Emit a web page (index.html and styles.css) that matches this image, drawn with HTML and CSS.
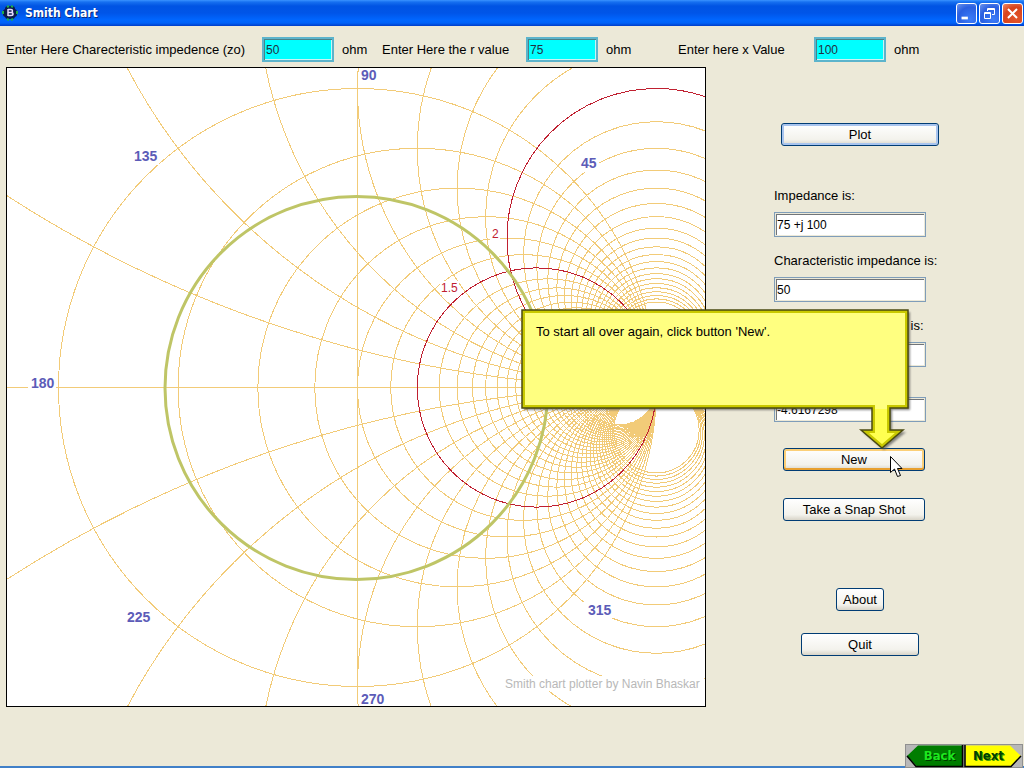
FILE: index.html
```html
<!DOCTYPE html>
<html lang="en">
<head>
<meta charset="utf-8">
<title>Smith Chart</title>
<link rel="stylesheet" href="styles.css">
</head>
<body>
<header class="titlebar">
  <svg class="app-icon" viewBox="0 0 16 16" aria-hidden="true">
    <rect x="3" y="1" width="10" height="13" rx="3" fill="#0b1a4a"/>
    <rect x="1" y="4" width="14" height="8" rx="3" fill="#0b1a4a"/>
    <path d="M5 2l2-1M9 1l2 1M1 6v3M15 6v3M5 14l2 1M9 15l2-1" stroke="#1fae4a" stroke-width="2"/>
    <path d="M6 4v7M6 4.500h3q1.500 0 1.500 1.500T9 7.500H6M9 7.500q2 0 2 1.500T9 10.500H6" fill="none" stroke="#e6dcff" stroke-width="1.500"/>
  </svg>
  <h1 class="title">Smith Chart</h1>
  <button class="win-btn" type="button" aria-label="Minimize"><svg viewBox="0 0 21 21"><rect x="5" y="14" width="7" height="3" fill="#fff"/></svg></button>
  <button class="win-btn" type="button" aria-label="Restore"><svg viewBox="0 0 19 19" fill="none" stroke="#fff"><path d="M7.500 7V4.500h7v6H12M7 5.500h8M4.500 8.500h6v6h-6zM4 9.500h7"/></svg></button>
  <button class="win-btn win-close" type="button" aria-label="Close"><svg viewBox="0 0 21 21"><path d="M5.500 5.500l10 10M15.500 5.500l-10 10" stroke="#fff" stroke-width="2.200"/></svg></button>
</header>

<form class="inputs">
  <label for="zo">Enter Here Charecteristic impedence (zo)</label>
  <input id="zo" class="field field-cyan" type="text" value="50">
  <span class="unit">ohm</span>
  <label for="r">Enter Here the r value</label>
  <input id="r" class="field field-cyan" type="text" value="75">
  <span class="unit">ohm</span>
  <label for="x">Enter here x Value</label>
  <input id="x" class="field field-cyan" type="text" value="100">
  <span class="unit">ohm</span>
</form>

<main class="main">
  <section class="chart">
    <svg class="plot" viewBox="7 68 698 638" role="img" aria-label="Smith chart">
      <g id="grid" class="grid">
        <path d="M7 387.500H705M357.500 82V690"/>
      </g>
      <g class="label-bg">
        <rect x="28" y="376" width="28" height="16"/>
        <rect x="132" y="149" width="27" height="16"/>
        <rect x="359" y="68" width="20" height="14"/>
        <rect x="579" y="156" width="20" height="16"/>
        <rect x="124" y="610" width="30" height="16"/>
        <rect x="360" y="692" width="27" height="14"/>
        <rect x="584" y="601" width="30" height="17"/>
        <rect x="504" y="676" width="200" height="15"/>
        <rect x="440" y="281" width="19" height="14"/>
        <rect x="490" y="227" width="10" height="14"/>
      </g>
      <g id="marks" class="marks"></g>
      <circle class="swr" cx="356.500" cy="388" r="191.500"/>
      <g class="angles">
        <text x="31" y="388">180</text>
        <text x="134" y="161">135</text>
        <text x="361" y="80">90</text>
        <text x="581" y="168">45</text>
        <text x="127" y="622">225</text>
        <text x="361" y="704">270</text>
        <text x="588" y="615">315</text>
      </g>
      <g class="mark-text">
        <text x="441" y="292">1.5</text>
        <text x="492" y="238">2</text>
      </g>
      <text class="credit" x="505" y="688">Smith chart plotter by Navin Bhaskar</text>
    </svg>
  </section>

  <aside class="panel">
    <button class="btn btn-default plot-btn" type="button">Plot</button>
    <div class="results">
      <div class="result"><label for="imp">Impedance is:</label><input id="imp" class="field" type="text" value="75 +j 100"></div>
      <div class="result"><label for="char">Characteristic impedance is:</label><input id="char" class="field" type="text" value="50"></div>
      <div class="result"><label for="norm">Normalized impedance is:</label><input id="norm" class="field" type="text" value="1.5 +j 2"></div>
    </div>
    <input class="field last-field" type="text" value="-4.6167298" aria-label="Return loss">
    <div class="actions">
      <div class="new-wrap">
        <button class="btn btn-hot" type="button">New</button>
        <div class="callout">
          <svg class="callout-shape" viewBox="0 0 396 146" aria-hidden="true">
            <defs>
              <clipPath id="inside"><path d="M1 1H387V99H369V121H382L361 139L340 121H351V99H1Z"/></clipPath>
              <filter id="soft"><feGaussianBlur stdDeviation="1"/></filter>
            </defs>
            <path d="M3 3H389V101H371V123H385L363 141L342 123H353V101H3Z" fill="#555" opacity=".7" filter="url(#soft)"/>
            <path d="M1 1H387V99H369V121H382L361 139L340 121H351V99H1Z" fill="#ffff80"/>
            <path d="M352 100H368V121H381L361 138L341 121H352Z" fill="#ffff50"/>
            <path d="M1 1H387V99H369V121H382L361 139L340 121H351V99H1Z" fill="none" stroke="#c9c900" stroke-width="6" clip-path="url(#inside)"/>
            <path d="M1 1H387V99H369V121H382L361 139L340 121H351V99H1Z" fill="none" stroke="#4a4a10" stroke-width="1.500"/>
          </svg>
          <p class="callout-text">To start all over again, click button 'New'.</p>
        </div>
        <svg class="cursor" viewBox="0 0 13 22" aria-hidden="true"><path d="M.5.500V16.500L4.500 13L7.500 20.500L10.500 19.500L7.500 12.500H12Z" fill="#fff" stroke="#000"/></svg>
      </div>
      <button class="btn" type="button">Take a Snap Shot</button>
    </div>
    <button class="btn about-btn" type="button">About</button>
    <button class="btn quit-btn" type="button">Quit</button>
  </aside>
</main>

<footer class="footer">
  <nav class="nav">
    <button class="nav-btn nav-back" type="button">
      <svg viewBox="0 0 59 24" aria-hidden="true"><rect width="59" height="24" fill="#909090"/><rect x="1" y="1" width="57" height="22" fill="#b8b8b8"/><path d="M2 12L13 1.500H57.500V22.500H12Z" fill="#007d00"/><path d="M2 12L11 22.500H57.500V1" fill="none" stroke="#000" stroke-width="1.500"/></svg>
      <span>Back</span>
    </button>
    <button class="nav-btn nav-next" type="button">
      <svg viewBox="0 0 59 24" aria-hidden="true"><rect width="59" height="24" fill="#909090"/><rect x="1" y="1" width="57" height="22" fill="#b8b8b8"/><path d="M1.500 1.500H46L57 12L47 22.500H1.500Z" fill="#ff0"/><path d="M1 1V22.500H47L57 12" fill="none" stroke="#000" stroke-width="1.500"/></svg>
      <span>Next</span>
    </button>
  </nav>
</footer>
<script src="chart.js"></script>
</body>
</html>
```
FILE: styles.css
```css
* { box-sizing: border-box; }

body {
  margin: 0;
  min-height: 100vh;
  display: flex;
  flex-direction: column;
  background: #ece9d8;
  color: #000;
  font: 13px/16px "Liberation Sans", Arial, sans-serif;
}

button, input { font: inherit; color: inherit; }

.titlebar {
  display: flex;
  align-items: center;
  gap: 2px;
  height: 26px;
  padding: 0 1px 0 2px;
  background: linear-gradient(#3a93ff 0, #1670f0 2px, #0054e3 6px, #0055e8 13px, #0066ff 20px, #0062f8 23px, #003dc8 26px);
}

.app-icon { width: 16px; height: 16px; }

.title {
  flex: 1;
  margin: 0 0 0 5px;
  color: #fff;
  font: bold 12px/16px "DejaVu Sans Condensed", "Open Sans", sans-serif;
  text-shadow: 1px 1px #0a2a80;
}

.win-btn {
  width: 21px;
  height: 21px;
  padding: 0;
  border: 1px solid #fff;
  border-radius: 3px;
  background: radial-gradient(circle at 70% 80%, #3c7cf8, #2a5fe0 60%, #6d95ee);
}

.win-btn svg { display: block; width: 19px; height: 19px; }
.win-close { background: radial-gradient(circle at 70% 80%, #e2542a, #d8441c 60%, #ee8c6c); }

.inputs {
  display: grid;
  grid-template-columns: 256px 72px 48px 144px 72px 80px 136px 72px 1fr;
  align-items: center;
  margin: 0;
  padding: 11px 0 5px 6px;
}

.unit { padding-left: 8px; }

.field {
  width: 100%;
  height: 25px;
  padding: 0 2px;
  border: 1px solid #7f9db9;
  border-radius: 0;
  outline: 0;
  background: #fff;
  box-shadow: inset 1px 1px #ece9d8, inset -1px -1px #ece9d8, inset 2px 2px #71757a;
  font: 12px/16px "Liberation Sans", Arial, sans-serif;
}

.field-cyan {
  border: 2px solid #5cb4cc;
  background: #0ff;
  box-shadow: inset 1px 1px #4c8088, inset -1px -1px #c8f4f4;
  color: #203040;
}

.main { display: flex; align-items: flex-start; padding-left: 6px; }

.chart { flex: 1; border: 1px solid #000; background: #fff; }
.plot { display: block; width: 100%; }

.grid { fill: none; stroke: #f2cb78; shape-rendering: crispEdges; }
.label-bg { fill: #fff; }
.marks { fill: none; stroke: #c02030; shape-rendering: crispEdges; }
.swr { fill: none; stroke: #bfc566; stroke-width: 3px; }
.angles { fill: #5c5cb8; font: bold 14px "Liberation Sans", Arial, sans-serif; }
.mark-text { fill: #c02030; font-size: 12px; }
.credit { fill: #b8b8b8; font-size: 12px; }

.panel {
  flex: 0 0 318px;
  display: flex;
  flex-direction: column;
  align-items: flex-start;
  padding: 56px 78px 0 68px;
}

.btn {
  width: 100%;
  height: 23px;
  padding: 0;
  border: 1px solid #003c74;
  border-radius: 3px;
  background: linear-gradient(#fff, #f3f2ec 75%, #d8d4c8);
  line-height: 16px;
}

.btn-default { box-shadow: inset 0 0 0 2px #a8c4ee; }
.btn-hot { box-shadow: inset 0 -2px #e8a030, inset 0 0 0 2px #fbcf78; }
.plot-btn { width: 158px; align-self: center; }

.results {
  display: flex;
  flex-direction: column;
  gap: 16px;
  width: 100%;
  margin: 42px 0 30px;
}

.result { display: flex; flex-direction: column; gap: 8px; white-space: nowrap; }
.result .field, .last-field { width: 152px; }

.actions {
  display: flex;
  flex-direction: column;
  gap: 27px;
  width: 142px;
  margin: 26px 0 67px 9px;
}

.new-wrap { position: relative; }
.new-wrap .btn { display: block; }

.callout { position: absolute; left: -262px; top: -139px; width: 396px; height: 146px; pointer-events: none; }
.callout-shape { display: block; width: 100%; height: 100%; }
.callout-text { position: absolute; left: 15px; top: 15px; margin: 0; }
.cursor { position: absolute; left: 107px; top: 8px; width: 13px; height: 22px; }

.about-btn { width: 48px; align-self: center; }
.quit-btn { width: 118px; align-self: center; margin-top: 22px; }

.footer {
  display: flex;
  justify-content: flex-end;
  margin-top: auto;
  border-bottom: 2px solid #4080c8;
}

.nav { display: flex; margin-bottom: -2px; padding-right: 1px; }

.nav-btn {
  display: grid;
  width: 59px;
  height: 24px;
  padding: 0;
  border: 0;
  background: none;
  font: bold 13px/24px "DejaVu Sans Condensed", "DejaVu Sans", sans-serif;
}

.nav-btn > * { grid-area: 1 / 1; }
.nav-btn svg { width: 59px; height: 24px; }
.nav-back span { padding-left: 10px; color: #1ee81e; text-shadow: 1px 1px #003800; }
.nav-next span { padding-right: 10px; color: #004000; text-shadow: 1px 1px #40a000; }
```
FILE: chart.js
```js
// Constant-resistance and constant-reactance circles in steps of 0.25.
const grid = document.getElementById("grid");
const marks = document.getElementById("marks");
const RADIUS = 299;
const RIGHT = 656.5;
const AXIS = 387.5;

function addCircle(group, cx, cy, r) {
  const circle = document.createElementNS("http://www.w3.org/2000/svg", "circle");
  circle.setAttribute("cx", cx);
  circle.setAttribute("cy", cy);
  circle.setAttribute("r", r);
  group.append(circle);
}

function addResistance(group, value) {
  const r = RADIUS / (value + 1);
  addCircle(group, RIGHT - r, AXIS, r);
}

function addReactance(group, value) {
  const r = RADIUS / Math.abs(value);
  addCircle(group, RIGHT, AXIS - Math.sign(value) * r, r);
}

for (let value = 0; value <= 7; value += 0.25) {
  addResistance(grid, value);
  if (value > 0) {
    addReactance(grid, value);
    addReactance(grid, -value);
  }
}

// The plotted impedance: r = 1.5, x = 2.
addResistance(marks, 1.5);
addReactance(marks, 2);
```
